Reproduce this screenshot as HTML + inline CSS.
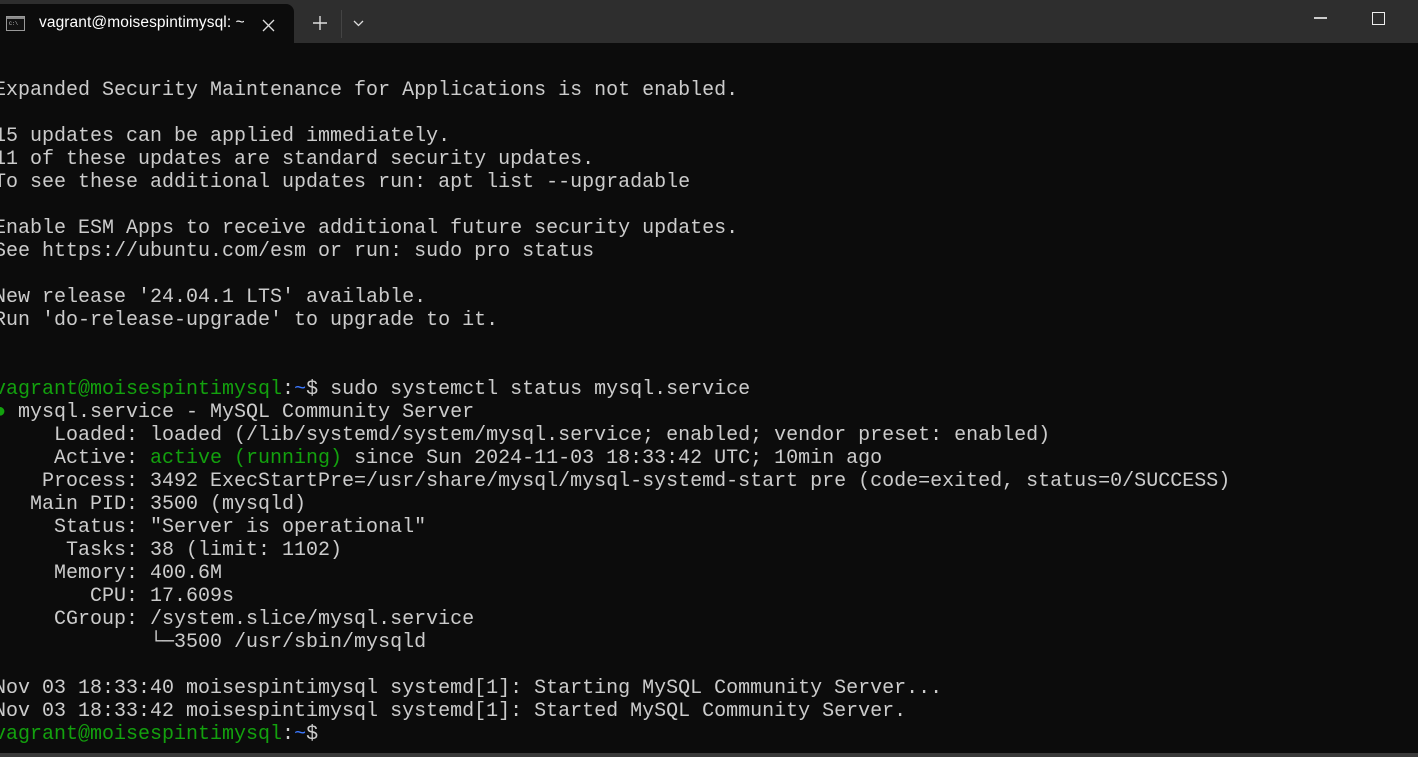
<!DOCTYPE html>
<html><head><meta charset="utf-8"><style>
*{margin:0;padding:0;box-sizing:border-box}
html,body{width:1418px;height:757px;overflow:hidden;background:#0c0c0c}
#bar{position:absolute;left:0;top:0;width:1418px;height:43px;background:#2e2e2e}
#tab{position:absolute;left:0;top:4px;width:294px;height:39px;background:#0c0c0c;border-radius:0 8px 0 0}
#tab .t{position:absolute;left:39px;top:10px;font:15.5px "Liberation Sans",sans-serif;color:#fff;letter-spacing:0.1px}
#term{position:absolute;left:-6px;top:79px;font:20px/23px "Liberation Mono",monospace;color:#cccccc;white-space:pre}
.g{color:#13a10e}.b{color:#3b78ff}
#bot{position:absolute;left:0;top:753px;width:1418px;height:4px;background:#3a3a3a}
</style></head><body>
<div id="bar">
<div id="tab">
<svg style="position:absolute;left:6px;top:12px" width="19" height="15"><rect x="0.5" y="0.5" width="18" height="14" fill="#111" stroke="#999"/><rect x="1" y="1" width="17" height="2" fill="#888"/><text x="3" y="9" font-size="5" fill="#ccc" font-family="Liberation Mono">C:\</text></svg>
<div class="t">vagrant@moisespintimysql: ~</div>
<svg style="position:absolute;left:262px;top:15px" width="13" height="13"><path d="M1 1L12 12M12 1L1 12" stroke="#ddd" stroke-width="1.3"/></svg>
</div>
<svg style="position:absolute;left:313px;top:16px" width="14" height="14"><path d="M7 0V14M0 7H14" stroke="#ddd" stroke-width="1.4"/></svg>
<div style="position:absolute;left:341px;top:10px;width:1px;height:28px;background:#444"></div>
<svg style="position:absolute;left:353px;top:20px" width="11" height="7"><path d="M1 1L5.5 5.5L10 1" stroke="#ddd" stroke-width="1.3" fill="none"/></svg>
<div style="position:absolute;left:1314px;top:17px;width:13px;height:2px;background:#ccc"></div>
<div style="position:absolute;left:1372px;top:12px;width:13px;height:13px;border:1.5px solid #eee"></div>
</div>
<div id="term">Expanded Security Maintenance for Applications is not enabled.

15 updates can be applied immediately.
11 of these updates are standard security updates.
To see these additional updates run: apt list --upgradable

Enable ESM Apps to receive additional future security updates.
See https://ubuntu.com/esm or run: sudo pro status

New release '24.04.1 LTS' available.
Run 'do-release-upgrade' to upgrade to it.


<span class="g">vagrant@moisespintimysql</span>:<span class="b">~</span>$ sudo systemctl status mysql.service
<span class="g">●</span> mysql.service - MySQL Community Server
     Loaded: loaded (/lib/systemd/system/mysql.service; enabled; vendor preset: enabled)
     Active: <span class="g">active (running)</span> since Sun 2024-11-03 18:33:42 UTC; 10min ago
    Process: 3492 ExecStartPre=/usr/share/mysql/mysql-systemd-start pre (code=exited, status=0/SUCCESS)
   Main PID: 3500 (mysqld)
     Status: "Server is operational"
      Tasks: 38 (limit: 1102)
     Memory: 400.6M
        CPU: 17.609s
     CGroup: /system.slice/mysql.service
             └─3500 /usr/sbin/mysqld

Nov 03 18:33:40 moisespintimysql systemd[1]: Starting MySQL Community Server...
Nov 03 18:33:42 moisespintimysql systemd[1]: Started MySQL Community Server.
<span class="g">vagrant@moisespintimysql</span>:<span class="b">~</span>$</div>
<div id="bot"></div>
</body></html>
